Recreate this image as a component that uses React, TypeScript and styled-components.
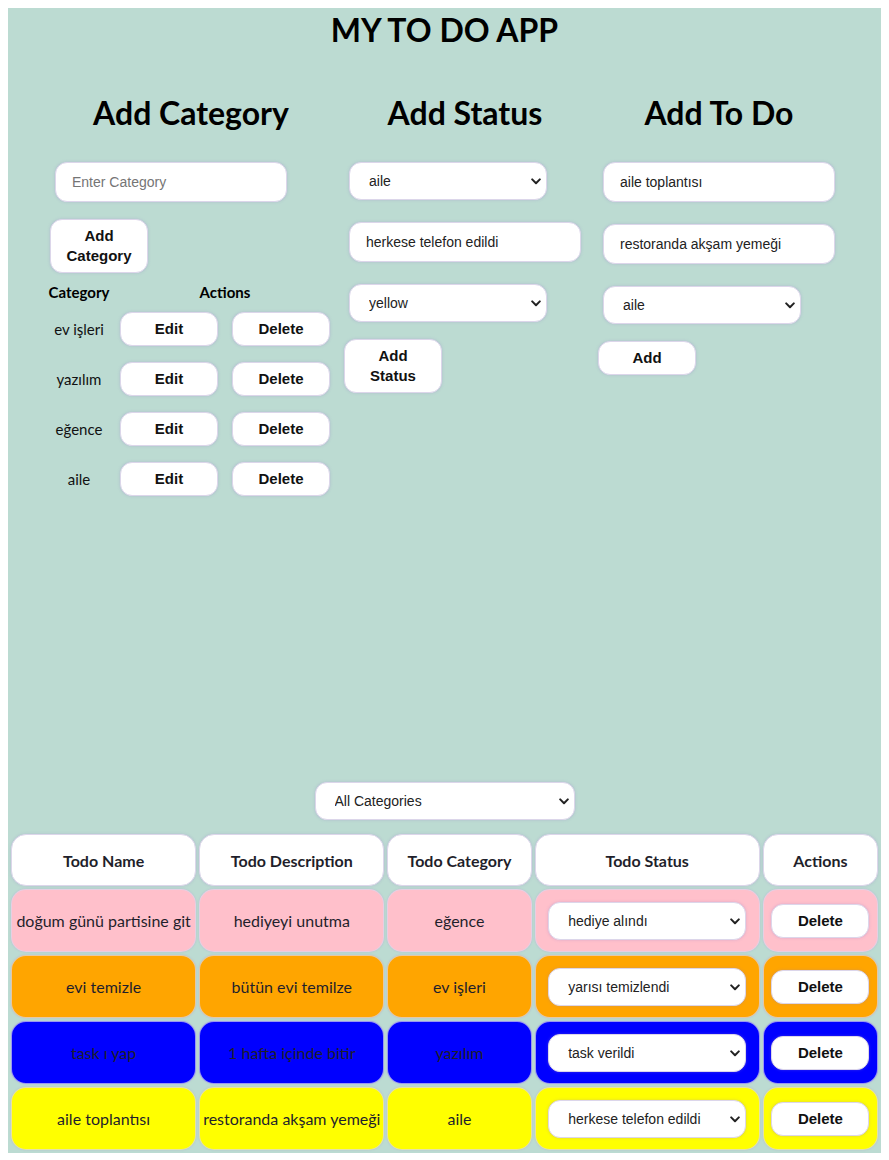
import React from "react";
import styled, { createGlobalStyle } from "styled-components";

const GlobalStyle = createGlobalStyle`
  body {
    margin: 8px;
    font-family: Lato, "Noto Sans", sans-serif;
    color: #1f1f2b;
  }
  * { box-sizing: border-box; }
`;

const Page = styled.div`
  background: #bcdbd2;
  display: flex;
  flex-direction: column;
`;

const Title = styled.h1`
  margin: 0;
  padding-top: 3px;
  font-family: Lato, sans-serif;
  font-size: 32px;
  line-height: 38px;
  font-weight: 700;
  text-align: center;
  color: #000;
`;

const Columns = styled.div`
  display: flex;
  align-items: flex-start;
  padding-left: 36px;
  margin-top: 45px;
  height: 677px;
`;

const Column = styled.div<{ $w: number }>`
  width: ${(p) => p.$w}px;
  display: flex;
  flex-direction: column;
  align-items: flex-start;
`;

const Heading = styled.h2`
  align-self: stretch;
  margin: 0 0 19px;
  font-family: Lato, sans-serif;
  font-size: 32px;
  line-height: 38px;
  font-weight: 700;
  text-align: center;
  color: #000;
`;

const TextInput = styled.input`
  width: 232px;
  height: 40px;
  margin: 11px 0 11px 11px;
  padding: 0 16px;
  border: 1px solid #dcd6ea;
  border-radius: 12px;
  background: #fff;
  box-shadow: 0 0 3px rgba(150, 130, 200, 0.35);
  font-family: "Liberation Sans", Arial, sans-serif;
  font-size: 14px;
  color: #222;
  outline: none;
  &::placeholder { color: #757575; }
`;

const SelectWrap = styled.div<{ $w: number; $m: string }>`
  position: relative;
  width: ${(p) => p.$w}px;
  height: 38px;
  margin: ${(p) => p.$m};
`;

const Select = styled.select`
  appearance: none;
  -webkit-appearance: none;
  width: 100%;
  height: 100%;
  padding: 0 28px 0 19px;
  border: 1px solid #dcd6ea;
  border-radius: 12px;
  background: #fff;
  box-shadow: 0 0 3px rgba(150, 130, 200, 0.35);
  font-family: "Liberation Sans", Arial, sans-serif;
  font-size: 14px;
  color: #222;
  outline: none;
`;

const Chevron = styled.svg`
  position: absolute;
  right: 6px;
  top: 50%;
  margin-top: -3px;
  width: 10px;
  height: 7px;
  pointer-events: none;
`;

const Button = styled.button<{ $m?: string }>`
  width: 98px;
  margin: ${(p) => p.$m ?? "6px 0 6px 6px"};
  padding: 6px 12px;
  border: 1px solid #dcd6ea;
  border-radius: 12px;
  background: #fff;
  box-shadow: 0 0 3px rgba(150, 130, 200, 0.35);
  font-family: "Liberation Sans", Arial, sans-serif;
  font-size: 15px;
  font-weight: 700;
  line-height: 20px;
  color: #111;
  cursor: pointer;
`;

const CatGrid = styled.div`
  display: grid;
  grid-template-columns: 68px 112px 112px;
  margin: 1px 0 0 1px;
`;

const CatHead = styled.div<{ $span?: boolean }>`
  height: 24px;
  line-height: 24px;
  text-align: center;
  font-size: 15px;
  font-weight: 700;
  color: #000;
  ${(p) => (p.$span ? "grid-column: span 2;" : "")}
`;

const CatCell = styled.div`
  height: 50px;
  display: flex;
  align-items: center;
  justify-content: center;
  font-size: 15px;
  color: #111;
`;

const FilterRow = styled.div`
  display: flex;
  justify-content: center;
`;

const Table = styled.table`
  width: 100%;
  border-collapse: separate;
  border-spacing: 3px;
  table-layout: fixed;
`;

const Th = styled.th<{ $w: number }>`
  width: ${(p) => p.$w}px;
  height: 52px;
  background: #fff;
  border: 1px solid #dcd6ea;
  border-radius: 15px;
  box-shadow: 0 0 3px rgba(150, 130, 200, 0.3);
  font-size: 16px;
  font-weight: 700;
  color: #1f1f2b;
  text-align: center;
  padding: 0;
`;

const Td = styled.td<{ $bg: string }>`
  height: 63px;
  background: ${(p) => p.$bg};
  border: 1px solid rgba(220, 214, 236, 0.7);
  border-radius: 15px;
  box-shadow: 0 0 2px rgba(150, 130, 200, 0.3);
  font-size: 16px;
  color: #1f1f2b;
  text-align: center;
  padding: 0;
  white-space: nowrap;
`;

const CellCenter = styled.div`
  display: flex;
  justify-content: center;
  align-items: center;
`;

const ChevronIcon = () => (
  <Chevron viewBox="0 0 10 7">
    <path d="M1.2 1.4 L5 5.2 L8.8 1.4" fill="none" stroke="#222" strokeWidth="2" strokeLinecap="round" strokeLinejoin="round" />
  </Chevron>
);

const Dropdown = ({ w, m, value, options }: { w: number; m: string; value: string; options: string[] }) => (
  <SelectWrap $w={w} $m={m}>
    <Select defaultValue={value}>
      {options.map((o) => (
        <option key={o} value={o}>{o}</option>
      ))}
    </Select>
    <ChevronIcon />
  </SelectWrap>
);

const categories = ["ev işleri", "yazılım", "eğence", "aile"];

const todos = [
  { name: "doğum günü partisine git", desc: "hediyeyi unutma", cat: "eğence", status: "hediye alındı", bg: "#ffc0cb" },
  { name: "evi temizle", desc: "bütün evi temilze", cat: "ev işleri", status: "yarısı temizlendi", bg: "#ffa500" },
  { name: "task ı yap", desc: "1 hafta içinde bitir", cat: "yazılım", status: "task verildi", bg: "#0000ff" },
  { name: "aile toplantısı", desc: "restoranda akşam yemeği", cat: "aile", status: "herkese telefon edildi", bg: "#ffff00" },
];

export default function App() {
  return (
    <>
      <GlobalStyle />
      <Page>
        <Title>MY TO DO APP</Title>
        <Columns>
          <Column $w={294}>
            <Heading>Add Category</Heading>
            <TextInput placeholder="Enter Category" />
            <Button>Add Category</Button>
            <CatGrid>
              <CatHead>Category</CatHead>
              <CatHead $span>Actions</CatHead>
              {categories.map((c) => (
                <React.Fragment key={c}>
                  <CatCell>{c}</CatCell>
                  <CatCell><Button $m="0">Edit</Button></CatCell>
                  <CatCell><Button $m="0">Delete</Button></CatCell>
                </React.Fragment>
              ))}
            </CatGrid>
          </Column>
          <Column $w={254}>
            <Heading>Add Status</Heading>
            <Dropdown w={198} m="11px 0 11px 11px" value="aile" options={categories} />
            <TextInput defaultValue="herkese telefon edildi" />
            <Dropdown w={198} m="11px 0 11px 11px" value="yellow" options={["pink", "orange", "blue", "yellow"]} />
            <Button>Add Status</Button>
          </Column>
          <Column $w={254}>
            <Heading>Add To Do</Heading>
            <TextInput defaultValue="aile toplantısı" />
            <TextInput defaultValue="restoranda akşam yemeği" />
            <Dropdown w={198} m="11px 0 11px 11px" value="aile" options={categories} />
            <Button>Add</Button>
          </Column>
        </Columns>
        <FilterRow>
          <Dropdown w={260} m="11px 0" value="All Categories" options={["All Categories", ...categories]} />
        </FilterRow>
        <Table>
          <thead>
            <tr>
              <Th $w={185}>Todo Name</Th>
              <Th $w={185}>Todo Description</Th>
              <Th $w={144}>Todo Category</Th>
              <Th $w={225}>Todo Status</Th>
              <Th $w={115}>Actions</Th>
            </tr>
          </thead>
          <tbody>
            {todos.map((t) => (
              <tr key={t.name}>
                <Td $bg={t.bg}>{t.name}</Td>
                <Td $bg={t.bg}>{t.desc}</Td>
                <Td $bg={t.bg}>{t.cat}</Td>
                <Td $bg={t.bg}>
                  <CellCenter>
                    <Dropdown w={198} m="0" value={t.status} options={[t.status]} />
                  </CellCenter>
                </Td>
                <Td $bg={t.bg}>
                  <CellCenter>
                    <Button $m="0">Delete</Button>
                  </CellCenter>
                </Td>
              </tr>
            ))}
          </tbody>
        </Table>
      </Page>
    </>
  );
}
